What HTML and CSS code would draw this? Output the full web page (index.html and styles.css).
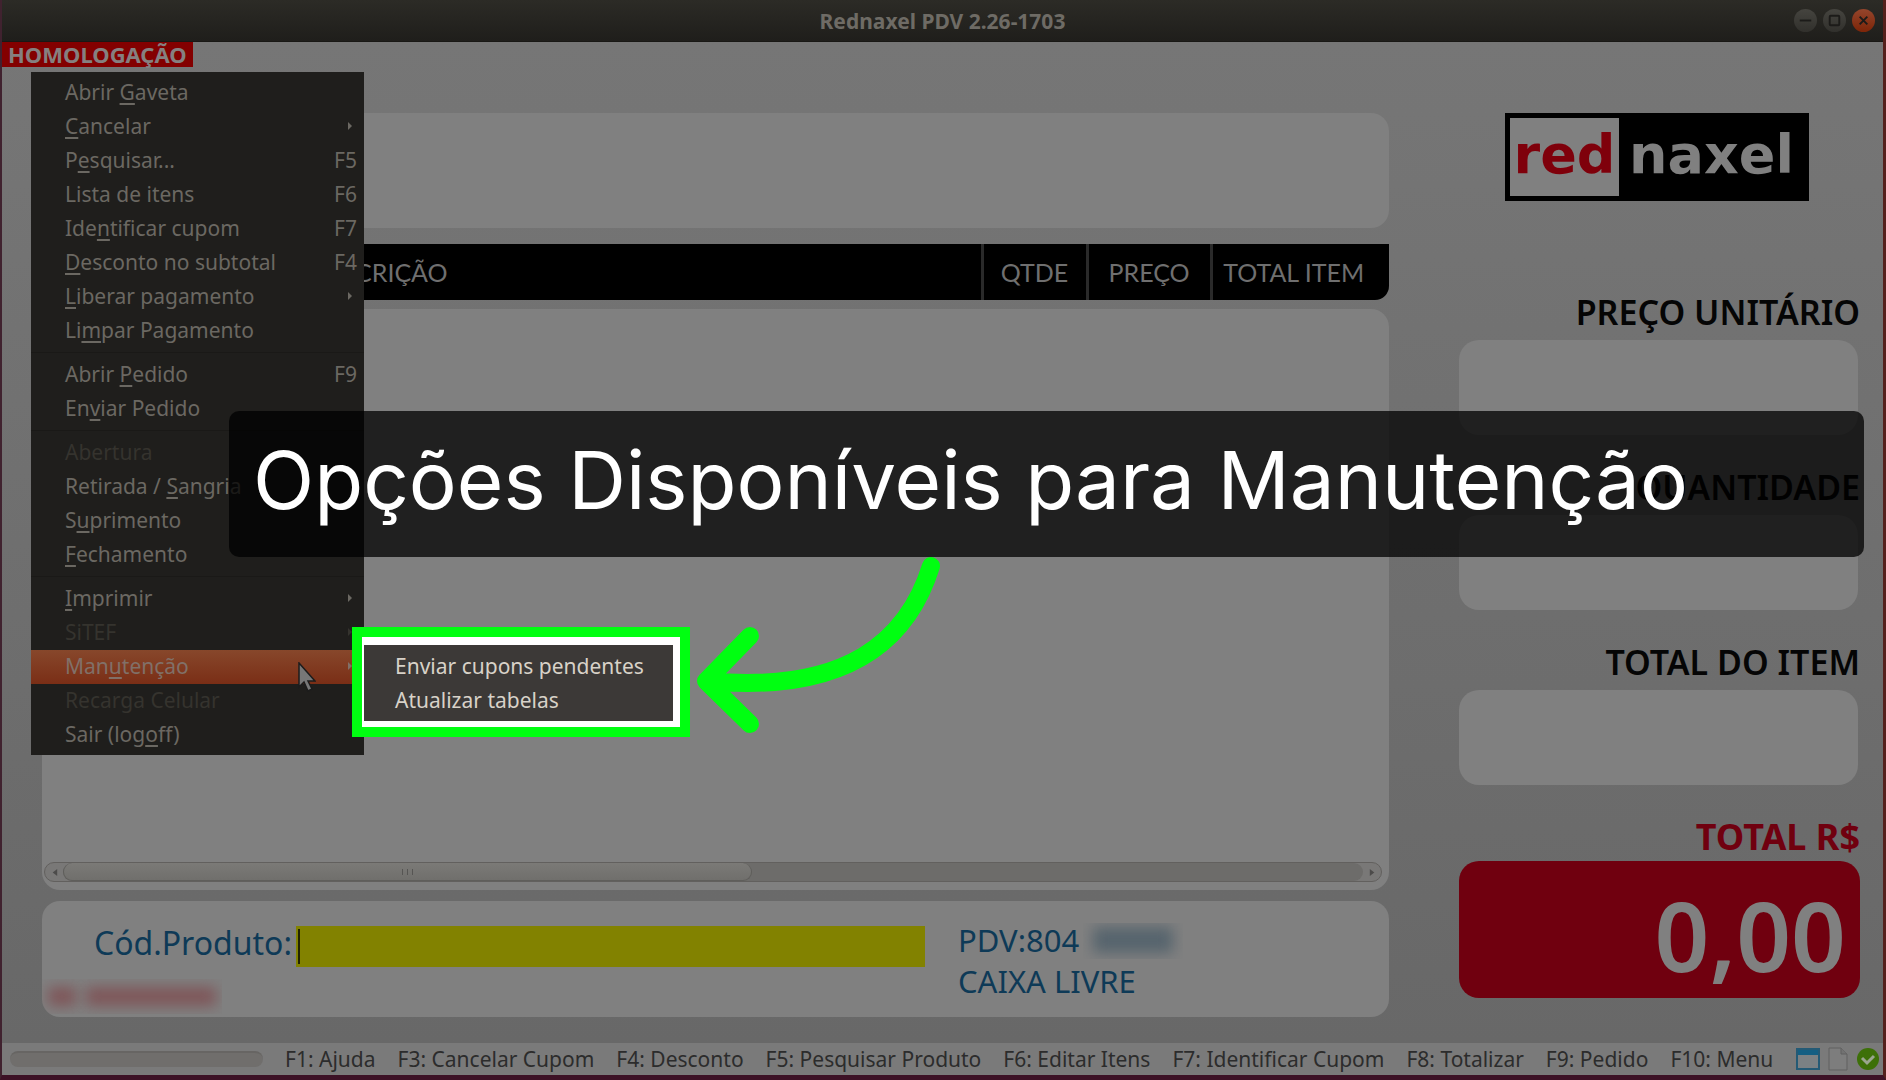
FILE: index.html
```
<!DOCTYPE html>
<html lang="pt-br">
<head>
    <meta charset="UTF-8">
    <title>Rednaxel PDV 2.26-1703</title>
    <link rel="stylesheet" href="styles.css">
</head>
<body>
    <div class="window">
        <header class="titlebar">
            <h1>Rednaxel PDV 2.26-1703</h1>
            <div class="window-buttons">
                <button type="button" class="win-btn" aria-label="Minimizar">
                    <svg viewBox="0 0 24 24"><path d="M6 12h12"/></svg>
                </button>
                <button type="button" class="win-btn" aria-label="Maximizar">
                    <svg viewBox="0 0 24 24"><rect x="7" y="7" width="10" height="10" rx="1"/></svg>
                </button>
                <button type="button" class="win-btn close" aria-label="Fechar">
                    <svg viewBox="0 0 24 24"><path d="M8 8l8 8M16 8l-8 8"/></svg>
                </button>
            </div>
        </header>

        <main class="content">
            <span class="env-badge">HOMOLOGAÇÃO</span>

            <section class="sale">
                <div class="panel display"></div>
                <table class="items-header">
                    <thead>
                        <tr>
                            <td class="col-code"></td>
                            <th class="col-desc">DESCRIÇÃO</th>
                            <th class="col-qty">QTDE</th>
                            <th class="col-price">PREÇO</th>
                            <th class="col-total">TOTAL ITEM</th>
                        </tr>
                    </thead>
                </table>
                <div class="panel items">
                    <div class="scrollbar">
                        <button type="button" class="scroll-btn" aria-label="Rolar para a esquerda">
                            <svg viewBox="0 0 10 10"><path d="M8 1v8L3 5z"/></svg>
                        </button>
                        <div class="scroll-track"><div class="scroll-thumb"><i></i><i></i><i></i></div></div>
                        <button type="button" class="scroll-btn" aria-label="Rolar para a direita">
                            <svg viewBox="0 0 10 10"><path d="M2 1v8l5-4z"/></svg>
                        </button>
                    </div>
                </div>
                <div class="panel entry">
                    <div class="product">
                        <label for="codigo">Cód.Produto:</label>
                        <div class="code-box"><input type="text" id="codigo"></div>
                        <div class="redacted operator"><i></i><i></i></div>
                    </div>
                    <div class="pdv">
                        <div class="pdv-line">PDV:804 <span class="redacted serial"><i></i></span></div>
                        <div class="pdv-line">CAIXA LIVRE</div>
                    </div>
                </div>
            </section>

            <aside class="totals">
                <div class="logo"><span class="logo-red">red</span><span class="logo-naxel">naxel</span></div>
                <label for="preco">PREÇO UNITÁRIO</label>
                <input type="text" id="preco" readonly>
                <label for="quantidade">QUANTIDADE</label>
                <input type="text" id="quantidade" readonly>
                <label for="total-item">TOTAL DO ITEM</label>
                <input type="text" id="total-item" readonly>
                <label for="total" class="grand">TOTAL R$</label>
                <input type="text" id="total" class="grand" value="0,00" readonly>
            </aside>
        </main>

        <footer class="statusbar">
            <div class="progress"></div>
            <span>F1: Ajuda</span>
            <span>F3: Cancelar Cupom</span>
            <span>F4: Desconto</span>
            <span>F5: Pesquisar Produto</span>
            <span>F6: Editar Itens</span>
            <span>F7: Identificar Cupom</span>
            <span>F8: Totalizar</span>
            <span>F9: Pedido</span>
            <span>F10: Menu</span>
            <div class="status-icons">
                <svg width="24" height="24" viewBox="0 0 24 24"><rect x="1" y="2" width="22" height="20" fill="#7b8184" stroke="#245a75" stroke-width="2"/><path d="M2 3h20v5H2z" fill="#145f83"/></svg>
                <svg width="20" height="24" viewBox="0 0 20 24"><path d="M1 1h12l6 6v16H1z" fill="#7d7d7d" stroke="#606060"/><path d="M13 1v6h6" fill="#727272" stroke="#606060"/></svg>
                <svg width="24" height="24" viewBox="0 0 24 24"><circle cx="12" cy="12" r="11" fill="#3d7008"/><path d="M6 11l5 5 7-7" fill="none" stroke="#9aa58f" stroke-width="3"/></svg>
            </div>
        </footer>
    </div>

    <nav class="menu">
        <ul>
            <li><button type="button"><span>Abrir <u>G</u>aveta</span></button></li>
            <li><button type="button" class="has-sub"><span><u>C</u>ancelar</span></button></li>
            <li><button type="button"><span>P<u>e</u>squisar...</span><kbd>F5</kbd></button></li>
            <li><button type="button"><span>Lista de itens</span><kbd>F6</kbd></button></li>
            <li><button type="button"><span>Ide<u>n</u>tificar cupom</span><kbd>F7</kbd></button></li>
            <li><button type="button"><span><u>D</u>esconto no subtotal</span><kbd>F4</kbd></button></li>
            <li><button type="button" class="has-sub"><span><u>L</u>iberar pagamento</span></button></li>
            <li><button type="button"><span>Li<u>m</u>par Pagamento</span></button></li>
            <li class="separator"></li>
            <li><button type="button"><span>Abrir <u>P</u>edido</span><kbd>F9</kbd></button></li>
            <li><button type="button"><span>En<u>v</u>iar Pedido</span></button></li>
            <li class="separator"></li>
            <li><button type="button" disabled>Abertura</button></li>
            <li><button type="button"><span>Retirada / <u>S</u>angria</span></button></li>
            <li><button type="button"><span>S<u>u</u>primento</span></button></li>
            <li><button type="button"><span><u>F</u>echamento</span></button></li>
            <li class="separator"></li>
            <li><button type="button" class="has-sub"><span><u>I</u>mprimir</span></button></li>
            <li><button type="button" class="has-sub" disabled><span>SiTEF</span></button></li>
            <li><button type="button" class="has-sub selected"><span>Man<u>u</u>tenção</span></button></li>
            <li><button type="button" disabled>Recarga Celular</button></li>
            <li><button type="button"><span>Sair (log<u>o</u>ff)</span></button></li>
        </ul>
    </nav>

    <svg class="cursor" width="18" height="32" viewBox="0 0 18 32"><path d="M1 1v24l5-5 4 9 4-2-4-8h7z" fill="#777" stroke="#1c1c1c" stroke-width="1.5"/></svg>

    <div class="highlight">
        <ul class="submenu">
            <li><button type="button">Enviar cupons pendentes</button></li>
            <li><button type="button">Atualizar tabelas</button></li>
        </ul>
    </div>

    <div class="callout">Opções Disponíveis para Manutenção</div>

    <svg class="arrow" width="250" height="190" viewBox="690 550 250 190"><path d="M931 566C908 640 848 694 707 681M750 636L706 681L750 724"/></svg>
</body>
</html>
```
FILE: styles.css
```
* {
    box-sizing: border-box;
}

body {
    margin: 0;
    font-family: "Noto Sans", "Open Sans", sans-serif;
    font-size: 21px;
    background-color: #3d1226;
}

button,
input {
    font: inherit;
    color: inherit;
    border: none;
    margin: 0;
    padding: 0;
    background: none;
    outline: none;
}

ul {
    list-style: none;
    margin: 0;
    padding: 0;
}

.window {
    display: flex;
    flex-direction: column;
    min-height: 100vh;
    border: solid;
    border-width: 0 3px 5px 2px;
    border-color: #3d1226 #55201c #3d1226 #40222f;
}

/* Barra de título */
.titlebar {
    display: grid;
    grid-template-columns: 1fr auto 1fr;
    align-items: center;
    height: 42px;
    padding: 0 8px;
    background: linear-gradient(#2c2b26, #1f1e1b);
    border-bottom: 1px solid #191815;
}

.titlebar h1 {
    grid-column: 2;
    margin: 0;
    font-size: 21px;
    font-weight: 700;
    color: #6e6b65;
}

.window-buttons {
    display: flex;
    justify-content: flex-end;
    gap: 6px;
}

.win-btn {
    width: 23px;
    height: 23px;
    border-radius: 50%;
    background: linear-gradient(#45443f, #31302c);
}

.win-btn svg {
    display: block;
    fill: none;
    stroke: #1c1b19;
    stroke-width: 2;
}

.win-btn.close {
    background: linear-gradient(#94452c, #7d2508);
}

/* Área principal */
.content {
    position: relative;
    flex: 1;
    display: flex;
    gap: 70px;
    padding: 71px 23px 26px 40px;
    background: linear-gradient(#767676, #6f6f6f 50%, #686868);
}

.env-badge {
    position: absolute;
    top: 0;
    left: 0;
    padding: 0 6px;
    font-size: 22px;
    line-height: 25px;
    font-weight: 700;
    color: #858080;
    background-color: #830000;
}

.sale {
    flex: 1;
    display: flex;
    flex-direction: column;
}

.panel {
    background-color: #808080;
    border-radius: 18px;
}

.display {
    height: 115px;
}

.items-header {
    width: 100%;
    height: 56px;
    margin: 16px 0 9px;
    table-layout: fixed;
    border-collapse: collapse;
    border-radius: 0 0 14px 14px;
    background-color: #000;
    color: #6f6f6f;
    font-family: Lato, sans-serif;
    font-size: 25px;
}

.items-header th {
    padding: 0;
    font-weight: 400;
}

.items-header .col-code {
    width: 266px;
}

.items-header .col-desc {
    text-align: left;
}

.items-header .col-qty,
.items-header .col-price,
.items-header .col-total {
    border-left: 3px solid #2a2a2a;
}

.col-qty {
    width: 105px;
}

.col-price {
    width: 124px;
}

.items-header .col-total {
    width: 178px;
    padding-right: 14px;
}

.items {
    flex: 1;
    display: flex;
    align-items: flex-end;
    padding: 0 7px 8px 2px;
    margin-bottom: 11px;
}

.scrollbar {
    flex: 1;
    display: flex;
    height: 20px;
    border: 1px solid #62605e;
    border-radius: 10px;
    background-color: #797877;
}

.scroll-btn {
    width: 18px;
    display: flex;
    align-items: center;
    justify-content: center;
}

.scroll-btn svg {
    width: 9px;
    fill: #4c4b4a;
}

.scroll-track {
    flex: 1;
    background-color: #6d6c6a;
    border-radius: 9px;
}

.scroll-thumb {
    display: flex;
    align-items: center;
    justify-content: center;
    gap: 4px;
    width: 53%;
    height: 18px;
    border: 1px solid #5f5e5b;
    border-top: none;
    border-radius: 9px;
    background: linear-gradient(#7b7a77, #706f6c);
}

.scroll-thumb i {
    width: 1px;
    height: 6px;
    background-color: #565553;
}

.entry {
    display: flex;
    gap: 33px;
    height: 116px;
    color: #0e3a57;
    font-size: 31px;
    overflow: hidden;
}

.product {
    display: grid;
    grid-template-columns: 254px 629px;
    grid-template-rows: 41px 35px;
    gap: 12px 0;
    padding-top: 25px;
}

.product label {
    padding-right: 4px;
    text-align: right;
    font-size: 32px;
    line-height: 34px;
    white-space: nowrap;
}

.code-box {
    display: flex;
    padding: 3px 2px;
    background-color: #828200;
}

.code-box input {
    flex: 1;
    border-left: 2px solid #222200;
}

.redacted {
    display: flex;
    overflow: hidden;
}

.redacted i {
    filter: blur(7px);
}

.operator {
    gap: 10px;
    width: 180px;
    padding: 8px 6px;
}

.operator i {
    width: 28px;
    background-color: #7e5558;
}

.operator i + i {
    flex: 1;
}

.pdv {
    padding-top: 19px;
}

.pdv-line {
    display: flex;
    align-items: center;
    gap: 4px;
    line-height: 41px;
}

.serial {
    width: 100px;
    height: 36px;
    padding: 4px 10px 6px;
}

.serial i {
    flex: 1;
    background-color: #56646d;
}

/* Coluna de totais */
.totals {
    display: flex;
    flex-direction: column;
    width: 401px;
    color: #050505;
}

.logo {
    align-self: center;
    display: flex;
    width: 304px;
    height: 88px;
    margin: 0 0 81px -5px;
    padding: 5px;
    background-color: #000;
    font-family: "DejaVu Sans", sans-serif;
    font-size: 54px;
    font-weight: 700;
    line-height: 74px;
}

.logo-red {
    width: 109px;
    text-align: center;
    color: #7f000b;
    background-color: #808080;
}

.logo-naxel {
    flex: 1;
    text-align: center;
    color: #808080;
}

.totals label {
    height: 58px;
    line-height: 60px;
    text-align: right;
    font-size: 34px;
    font-weight: 600;
    white-space: nowrap;
}

.totals input {
    width: 399px;
    height: 95px;
    margin-bottom: 22px;
    border-radius: 20px;
    background-color: #808080;
}

.totals label.grand {
    height: 54px;
    font-size: 36px;
    font-weight: 700;
    color: #70000f;
}

.totals input.grand {
    width: 100%;
    height: 137px;
    margin-bottom: 0;
    padding: 10px 14px 0 0;
    text-align: right;
    font-size: 96px;
    font-weight: 600;
    color: #808080;
    background-color: #70000f;
}

/* Barra de status */
.statusbar {
    display: flex;
    align-items: center;
    gap: 22px;
    height: 32px;
    padding: 0 3px 0 8px;
    line-height: 30px;
    color: #2c2c2c;
    background-color: #7a7a7a;
    white-space: nowrap;
}

.progress {
    width: 253px;
    height: 16px;
    border-radius: 8px;
    border-top: 2px solid #676563;
    background-color: #706e6c;
}

.status-icons {
    display: flex;
    gap: 8px;
    margin-left: auto;
}

/* Menu suspenso */
.menu {
    position: absolute;
    top: 72px;
    left: 31px;
    width: 333px;
    padding: 4px 0 3px;
    background-color: #1f1e1c;
    color: #6b6862;
}

.menu button {
    display: flex;
    justify-content: space-between;
    align-items: center;
    width: 100%;
    height: 34px;
    padding: 0 7px 2px 34px;
    white-space: pre;
}

.menu button:disabled {
    color: #35332e;
}

.menu kbd {
    font: inherit;
}

.menu .has-sub::after {
    content: "";
    margin-right: 5px;
    border: 4px solid transparent;
    border-left-color: currentColor;
    border-right-width: 0;
}

.menu .selected {
    background: linear-gradient(#87472b, #7a2e16);
    color: #817068;
}

.menu u,
.submenu u {
    text-underline-offset: 3px;
}

.separator {
    height: 10px;
    padding-top: 4px;
}

.separator::before {
    content: "";
    display: block;
    border-top: 1px solid #1a1917;
}

.cursor {
    position: absolute;
    top: 662px;
    left: 298px;
}

.highlight {
    position: absolute;
    top: 627px;
    left: 352px;
    width: 338px;
    padding: 8px 7px 6px 2px;
    border: 10px solid #00ff11;
    background-color: #fff;
}

.submenu {
    padding: 4px 0;
    background-color: #3c3937;
    color: #d8d2c8;
}

.submenu button {
    width: 100%;
    height: 34px;
    padding-left: 31px;
    text-align: left;
    white-space: nowrap;
}

.callout {
    position: absolute;
    top: 411px;
    left: 229px;
    right: 22px;
    padding: 0 24px 8px;
    border-radius: 10px;
    background-color: rgba(0, 0, 0, 0.75);
    color: #fff;
    font-family: Inter, sans-serif;
    font-size: 80px;
    line-height: 138px;
    white-space: nowrap;
}

.arrow {
    position: absolute;
    top: 550px;
    left: 690px;
    fill: none;
    stroke: #00ff11;
    stroke-width: 18;
    stroke-linecap: round;
    stroke-linejoin: round;
}
```
